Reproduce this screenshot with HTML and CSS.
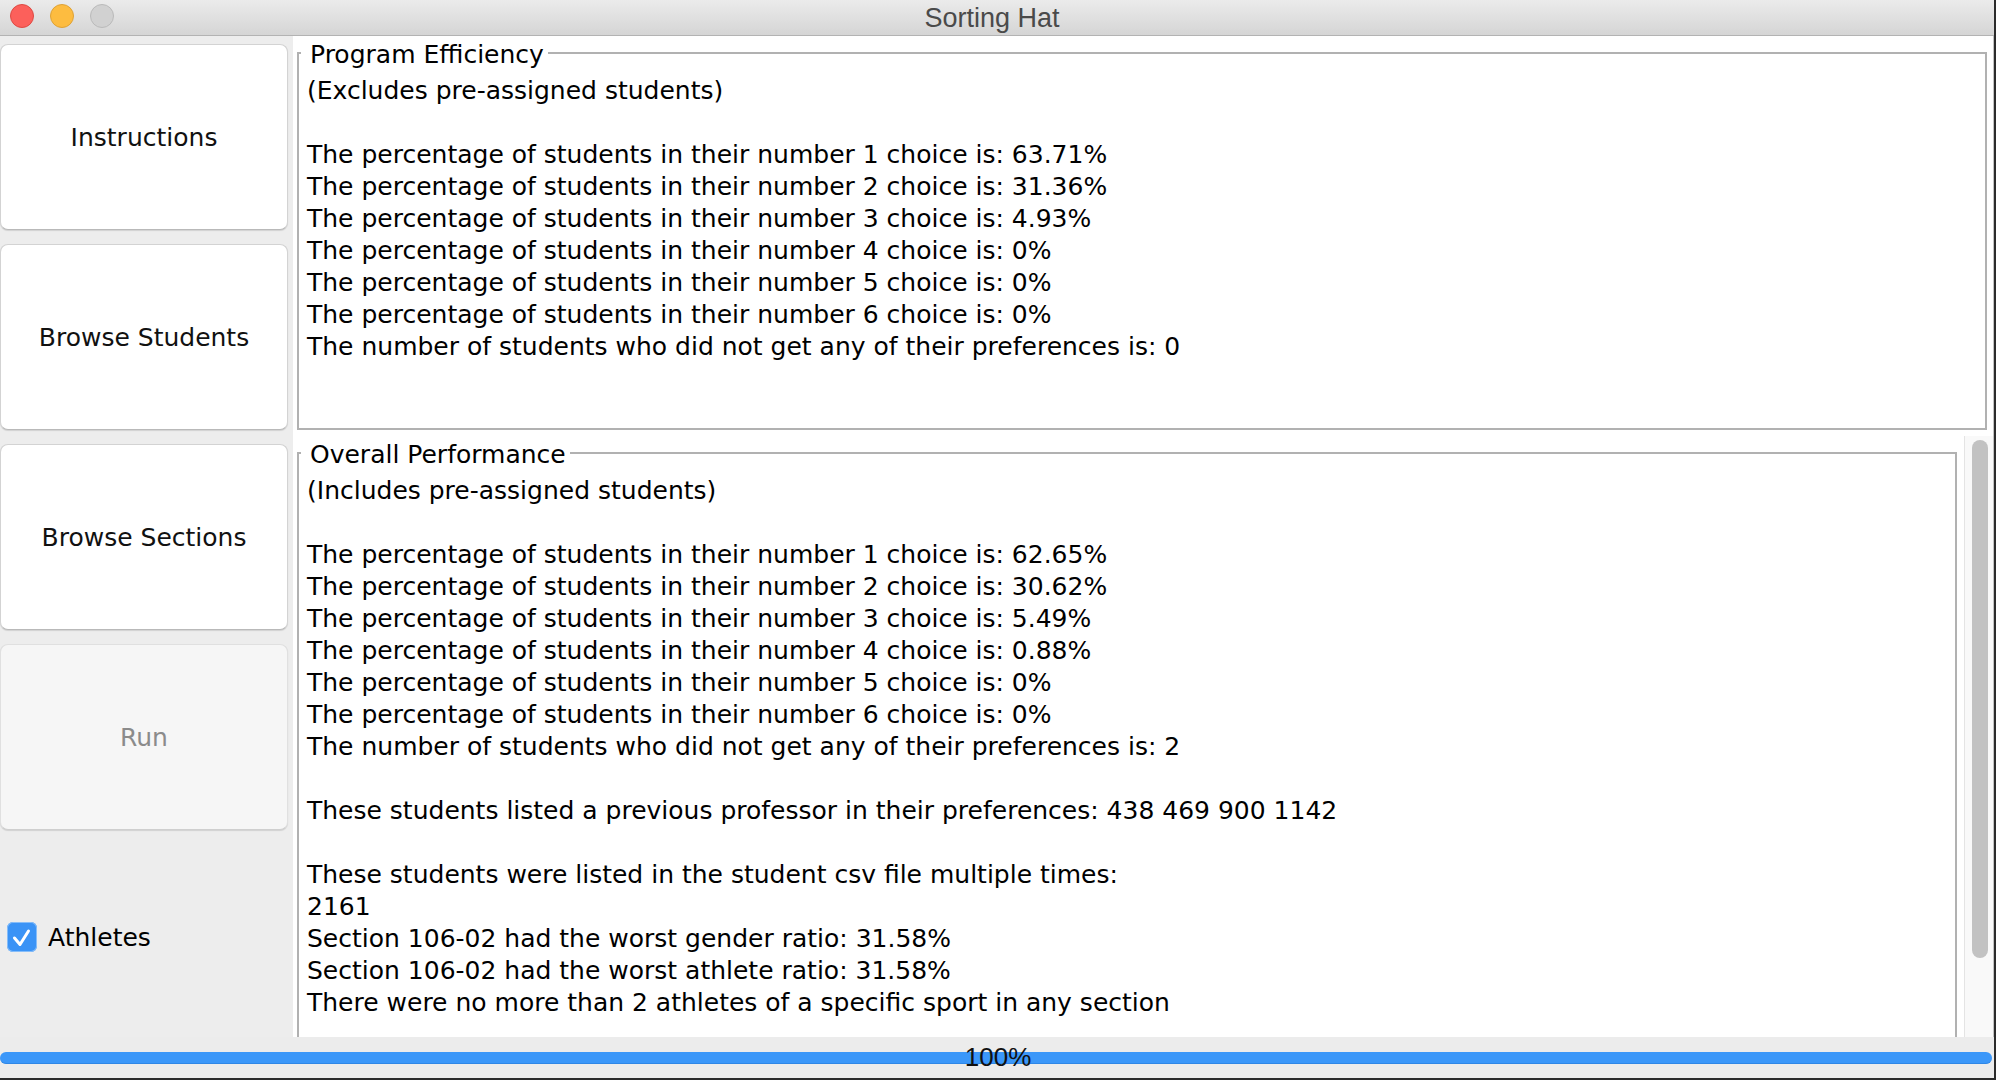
FILE: index.html
```html
<!DOCTYPE html>
<html lang="en">
<head>
<meta charset="utf-8">
<title>Sorting Hat</title>
<link rel="stylesheet" href="styles.css">
</head>
<body>
<div class="window">
  <header class="titlebar">
    <div class="lights">
      <span class="light close"></span>
      <span class="light min"></span>
      <span class="light max"></span>
    </div>
    <div class="title">Sorting Hat</div>
    <div></div>
  </header>
  <div class="main">
    <aside class="sidebar">
      <button class="btn">Instructions</button>
      <button class="btn">Browse Students</button>
      <button class="btn">Browse Sections</button>
      <button class="btn disabled">Run</button>
      <label class="check">
        <span class="box"><svg width="30" height="30" viewBox="0 0 30 30"><path d="M7.5 16 L13 22.5 L21.5 9" fill="none" stroke="#fff" stroke-width="3" stroke-linecap="round" stroke-linejoin="round"/></svg></span>
        <span class="check-label">Athletes</span>
      </label>
    </aside>
    <section class="content">
      <fieldset class="group">
        <legend>Program Efficiency</legend>
        <div class="body fixed">
          <div class="line">(Excludes pre-assigned students)</div>
          <div class="para">
            <div class="line">The percentage of students in their number 1 choice is: 63.71%</div>
            <div class="line">The percentage of students in their number 2 choice is: 31.36%</div>
            <div class="line">The percentage of students in their number 3 choice is: 4.93%</div>
            <div class="line">The percentage of students in their number 4 choice is: 0%</div>
            <div class="line">The percentage of students in their number 5 choice is: 0%</div>
            <div class="line">The percentage of students in their number 6 choice is: 0%</div>
            <div class="line">The number of students who did not get any of their preferences is: 0</div>
          </div>
        </div>
      </fieldset>
      <div class="scroll-pane">
        <div class="viewport">
          <fieldset class="group lower">
            <legend>Overall Performance</legend>
            <div class="body">
              <div class="line">(Includes pre-assigned students)</div>
              <div class="para">
                <div class="line">The percentage of students in their number 1 choice is: 62.65%</div>
                <div class="line">The percentage of students in their number 2 choice is: 30.62%</div>
                <div class="line">The percentage of students in their number 3 choice is: 5.49%</div>
                <div class="line">The percentage of students in their number 4 choice is: 0.88%</div>
                <div class="line">The percentage of students in their number 5 choice is: 0%</div>
                <div class="line">The percentage of students in their number 6 choice is: 0%</div>
                <div class="line">The number of students who did not get any of their preferences is: 2</div>
              </div>
              <div class="para">
                <div class="line">These students listed a previous professor in their preferences: 438 469 900 1142</div>
              </div>
              <div class="para">
                <div class="line">These students were listed in the student csv file multiple times:</div>
                <div class="line">2161</div>
                <div class="line">Section 106-02 had the worst gender ratio: 31.58%</div>
                <div class="line">Section 106-02 had the worst athlete ratio: 31.58%</div>
                <div class="line">There were no more than 2 athletes of a specific sport in any section</div>
              </div>
            </div>
          </fieldset>
        </div>
        <div class="vscroll"><div class="thumb"></div></div>
      </div>
    </section>
  </div>
  <footer class="footer">
    <div class="progress">
      <div class="bar"></div>
      <div class="pct">100%</div>
    </div>
  </footer>
</div>
</body>
</html>
```

FILE: styles.css
```css
* { box-sizing: border-box; }

html, body {
  margin: 0;
  padding: 0;
}

body {
  width: 1996px;
  height: 1080px;
  background: #2b2b2b;
  font-family: "DejaVu Sans", sans-serif;
  color: #000;
  overflow: hidden;
}

.window {
  width: 1994px;
  height: 1078px;
  display: flex;
  flex-direction: column;
  background: #ececec;
}

/* Title bar */
.titlebar {
  height: 36px;
  flex: none;
  display: grid;
  grid-template-columns: 1fr auto 1fr;
  align-items: center;
  background: linear-gradient(#ebebeb, #d5d5d5);
  border-bottom: 1px solid #b3b3b3;
}

.lights {
  display: flex;
  gap: 16px;
  padding-left: 10px;
  padding-bottom: 4px;
}

.light {
  width: 24px;
  height: 24px;
  border-radius: 50%;
  display: block;
}

.light.close { background: #fc605b; border: 1px solid #de4a43; }
.light.min { background: #fdbc40; border: 1px solid #dea236; }
.light.max { background: #d1d1d1; border: 1px solid #bababa; }

.title {
  font-family: "Liberation Sans", Arial, sans-serif;
  font-size: 27px;
  color: #4a4a4a;
  padding-right: 10px;
  padding-top: 1px;
}

/* Main area */
.main {
  flex: 1;
  display: flex;
  min-height: 0;
}

.sidebar {
  width: 293px;
  flex: none;
  display: flex;
  flex-direction: column;
  gap: 14px;
  padding-top: 8px;
  background: #ededed;
}

.btn {
  width: 288px;
  height: 186px;
  flex: none;
  background: #fff;
  border: 1px solid #d3d3d3;
  border-bottom-color: #b9b9b9;
  border-radius: 8px;
  box-shadow: 0 1px 1px rgba(0, 0, 0, 0.12);
  font-family: "DejaVu Sans", sans-serif;
  font-size: 25px;
  color: #111;
  padding: 0;
  margin: 0;
}

.btn.disabled {
  background: #f6f6f6;
  border-color: #e0e0e0;
  border-bottom-color: #cfcfcf;
  color: #8b8b8b;
}

.check {
  display: flex;
  align-items: center;
  gap: 11px;
  margin-top: 77px;
  padding-left: 7px;
  height: 32px;
}

.box {
  width: 30px;
  height: 30px;
  border-radius: 6px;
  background: #3a93f6;
  box-shadow: 0 0 0 1px #86bdf9 inset;
  display: block;
}

.box svg { display: block; }

.check-label {
  font-size: 25px;
  line-height: 32px;
  padding-top: 2px;
}

/* Content */
.content {
  flex: 1;
  min-width: 0;
  display: flex;
  flex-direction: column;
  gap: 6px;
  background: #fff;
  border-right: 1px solid #c2c2c2;
}

.group {
  margin: -1px 6px 0 4px;
  padding: 4px 8px 0 8px;
  border: 2px solid #b1b1b1;
  min-width: 0;
}

.group legend {
  font-size: 25px;
  line-height: 32px;
  margin-left: -6px;
  padding: 4px 4px 0 9px;
}

.body {
  font-size: 25px;
  line-height: 32px;
}

.body.fixed {
  height: 353px;
}

.para {
  margin-top: 32px;
}

.line {
  white-space: nowrap;
  height: 32px;
}

.scroll-pane {
  flex: 1;
  min-height: 0;
  display: flex;
}

.viewport {
  flex: 1;
  min-width: 0;
  overflow: hidden;
}

.group.lower {
  margin: -1px 7px 0 4px;
  padding-bottom: 110px;
}

.vscroll {
  width: 29px;
  flex: none;
  background: #f9f9f9;
  border-left: 1px solid #e4e4e4;
  padding: 4px 5px 0 7px;
}

.thumb {
  height: 518px;
  border-radius: 8px;
  background: #c2c2c2;
}

/* Footer / progress */
.footer {
  height: 41px;
  flex: none;
  padding-top: 7px;
  background: #ececec;
}

.progress {
  display: grid;
  width: 1992px;
  height: 26px;
}

.bar,
.pct {
  grid-area: 1 / 1;
  align-self: center;
}

.bar {
  height: 12px;
  border-radius: 6px;
  background: #3b97f9;
  border-bottom: 1px solid #2f87e6;
}

.pct {
  justify-self: center;
  font-family: "Liberation Sans", Arial, sans-serif;
  font-size: 26px;
  line-height: 26px;
  color: #111;
  padding-left: 4px;
  padding-bottom: 1px;
}
```
